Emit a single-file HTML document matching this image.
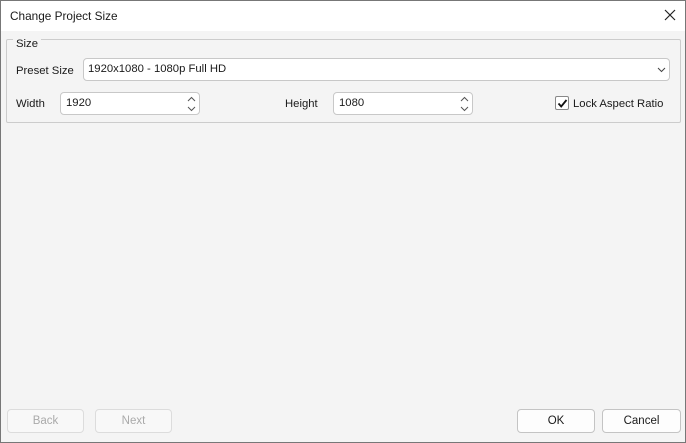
<!DOCTYPE html>
<html><head><style>
*{margin:0;padding:0;box-sizing:border-box}
body{width:686px;height:443px;overflow:hidden;font-family:"Liberation Sans",sans-serif;font-size:11.3px;color:#1a1a1a;position:relative;background:#f4f4f4}
.win{position:absolute;left:0;top:0;width:686px;height:443px;border:1px solid #777;background:#f4f4f4}
.title{position:absolute;left:0;top:0;width:684px;height:30px;background:#fff}
.abs{position:absolute}
.box{position:absolute;background:#fff;border:1px solid #c8c8c8;border-radius:4px}
.btn{position:absolute;border:1px solid #c4c4c4;border-radius:4px;background:#fdfdfd;text-align:center;line-height:22px;font-size:11.5px}
.dis{color:#aaa;border-color:#dcdcdc;background:#f8f8f8}
</style></head><body>
<div class="win">
<div class="title"><span class="abs" style="left:9px;top:8px;font-size:11.8px">Change Project Size</span>
<svg class="abs" style="left:663px;top:8px" width="12" height="12"><path d="M1 1L11 11M11 1L1 11" stroke="#222" stroke-width="1.2"/></svg></div>
<div class="abs" style="left:5px;top:38px;width:675px;height:84px;border:1px solid #ccc;border-radius:2px"></div>
<span class="abs" style="left:12px;top:37px;background:#f4f4f4;padding:0 3px">Size</span>
<span class="abs" style="left:15px;top:64px">Preset Size</span>
<div class="box" style="left:82px;top:57px;width:587px;height:23px"><span class="abs" style="left:4px;top:4px">1920x1080 - 1080p Full HD</span>
<svg class="abs" style="left:573px;top:8px" width="9" height="6"><path d="M1 1L4.5 4.5L8 1" stroke="#444" fill="none"/></svg></div>
<span class="abs" style="left:15px;top:97px">Width</span>
<div class="box" style="left:59px;top:91px;width:140px;height:23px"><span class="abs" style="left:5px;top:4px">1920</span>
<svg class="abs" style="left:126px;top:3px" width="9" height="16"><path d="M1 5L4.5 1.5L8 5M1 11L4.5 14.5L8 11" stroke="#555" fill="none"/></svg></div>
<span class="abs" style="left:284px;top:97px">Height</span>
<div class="box" style="left:332px;top:91px;width:140px;height:23px"><span class="abs" style="left:5px;top:4px">1080</span>
<svg class="abs" style="left:126px;top:3px" width="9" height="16"><path d="M1 5L4.5 1.5L8 5M1 11L4.5 14.5L8 11" stroke="#555" fill="none"/></svg></div>
<div class="box" style="left:554px;top:95px;width:14px;height:14px;border-color:#888;border-radius:2px"><svg class="abs" style="left:1px;top:1px" width="11" height="11"><path d="M1.5 5.5L4.2 8.5L9.5 2" stroke="#111" stroke-width="1.8" fill="none"/></svg></div>
<span class="abs" style="left:572px;top:97px">Lock Aspect Ratio</span>
<div class="btn dis" style="left:6px;top:408px;width:77px;height:24px">Back</div>
<div class="btn dis" style="left:94px;top:408px;width:77px;height:24px">Next</div>
<div class="btn" style="left:516px;top:408px;width:78px;height:24px">OK</div>
<div class="btn" style="left:601px;top:408px;width:79px;height:24px">Cancel</div>
</div>
</body></html>
